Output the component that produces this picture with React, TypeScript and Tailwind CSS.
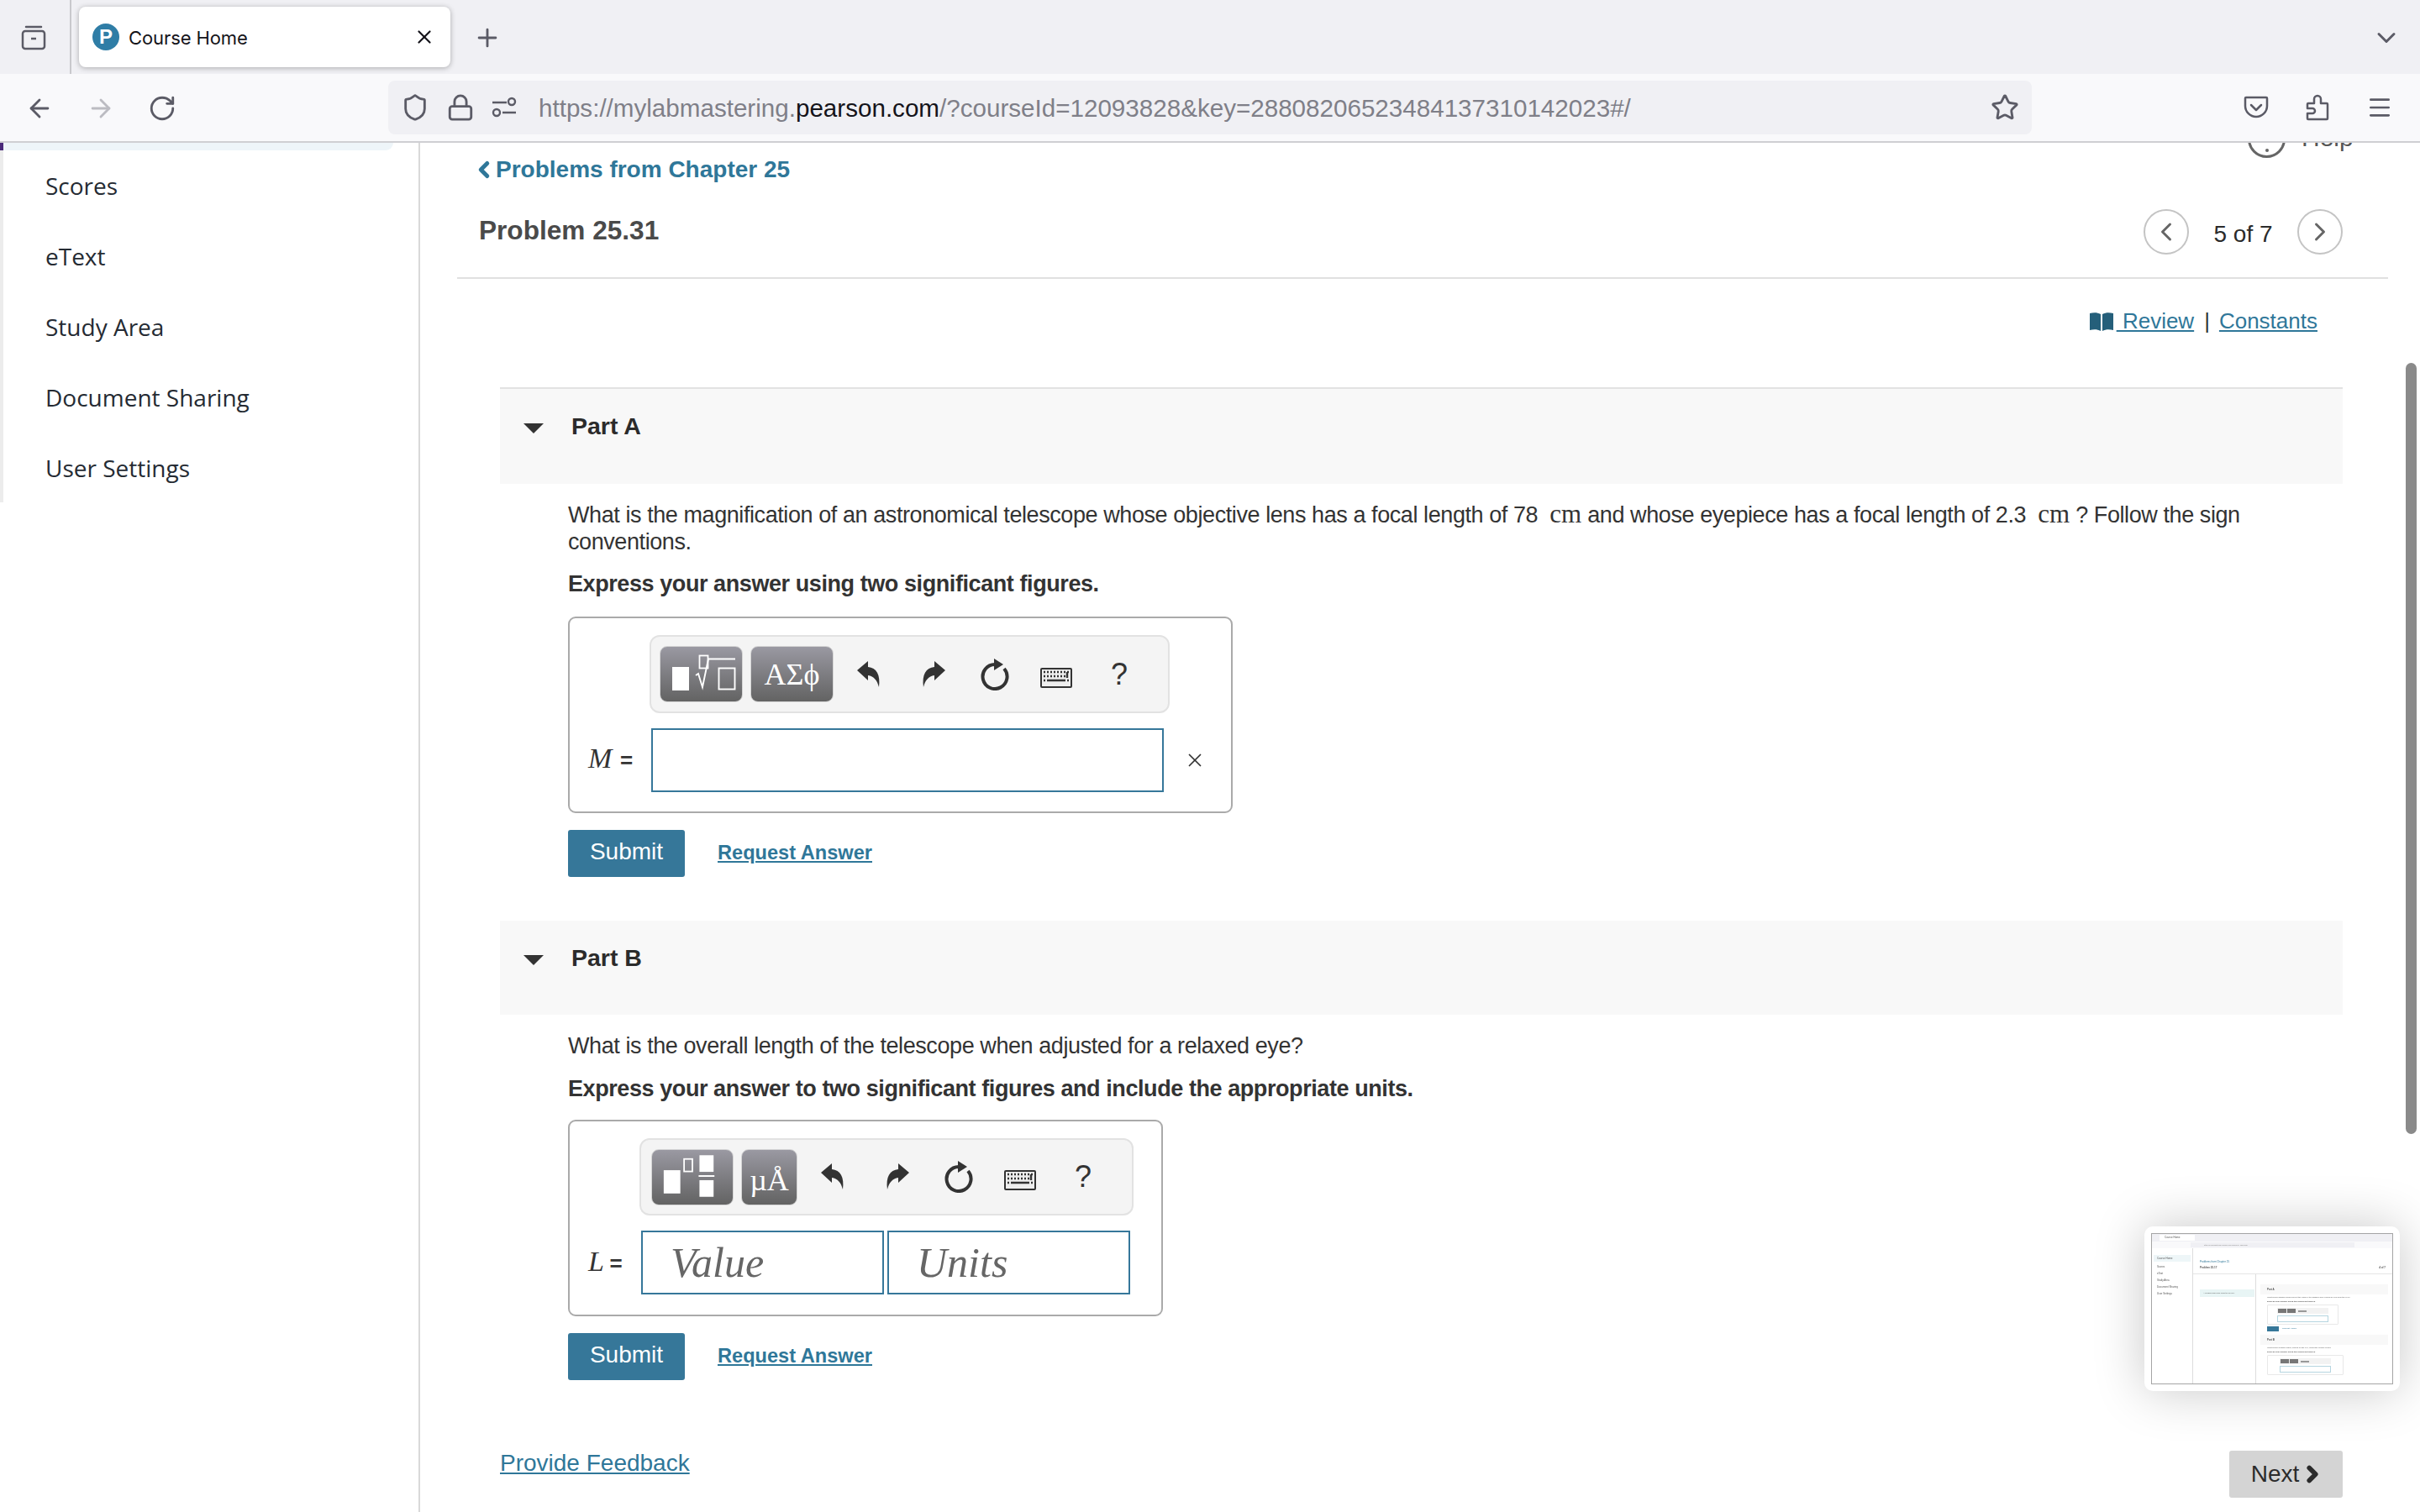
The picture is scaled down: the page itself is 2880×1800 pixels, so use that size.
import { ChevronDown, ChevronLeft, ChevronRight, Plus, X, Star, Menu, ArrowLeft, ArrowRight, RotateCw, Shield, Lock } from "lucide-react"

const serif = "font-['Liberation_Serif',serif]"

function TabGroupsIcon() {
  return (
    <svg width="32" height="32" viewBox="0 0 32 32" fill="none" stroke="#5b5b66" strokeWidth="2.5">
      <rect x="3" y="8" width="26" height="21" rx="3" />
      <path d="M7 3h18" strokeLinecap="round" />
      <path d="M13 17h6" />
    </svg>
  )
}

function PermissionIcon() {
  return (
    <svg width="30" height="28" viewBox="0 0 30 28" fill="none" stroke="#5b5b66" strokeWidth="2.4">
      <path d="M1 8h17M13 20h16" />
      <circle cx="24" cy="7" r="4" />
      <circle cx="6" cy="20" r="4" />
    </svg>
  )
}

function PocketIcon() {
  return (
    <svg width="30" height="30" viewBox="0 0 30 30" fill="none" stroke="#5b5b66" strokeWidth="2.5" strokeLinecap="round" strokeLinejoin="round">
      <path d="M3 3h24a1 1 0 0 1 1 1v9a13 13 0 0 1-26 0V4a1 1 0 0 1 1-1z" />
      <path d="M9 12l6 6 6-6" />
    </svg>
  )
}

function ExtensionIcon() {
  return (
    <svg width="30" height="32" viewBox="0 0 30 32" fill="none" stroke="#5b5b66" strokeWidth="2.5" strokeLinejoin="round">
      <path d="M4 11h7V6a4 4 0 0 1 8 0v5h7a1 1 0 0 1 1 1v17a1 1 0 0 1-1 1H4a1 1 0 0 1-1-1v-6h6a3 3 0 0 0 0-6H3v-5a1 1 0 0 1 1-1z" />
    </svg>
  )
}

function BrowserChrome() {
  return (
    <>
      {/* Tab strip */}
      <div className="h-[88px] bg-[#f0f0f4] flex items-center shrink-0">
        <div className="w-[85px] h-full flex items-center justify-center border-r-2 border-[#c8c8cc] pr-1 pt-[2px]">
          <TabGroupsIcon />
        </div>
        <div className="ml-[9px] w-[442px] h-[72px] bg-white rounded-[8px] shadow-[0_1px_6px_rgba(0,0,0,0.3)] flex items-center px-4">
          <div className="w-[32px] h-[32px] rounded-full bg-[#2f7da6] text-white flex items-center justify-center text-[24px] font-bold font-['Liberation_Sans',sans-serif]">P</div>
          <span className="ml-[11px] pt-[2px] text-[22px] tracking-[-0.1px] text-[#15141a] font-['Inter',sans-serif]">Course Home</span>
          <X className="ml-auto mr-[2px] text-[#15141a]" size={26} strokeWidth={2} />
        </div>
        <Plus className="ml-[27px] mt-[2px] text-[#5b5b66]" size={34} strokeWidth={2} />
        <ChevronDown className="ml-auto mr-[22px] mt-[2px] text-[#5b5b66]" size={36} strokeWidth={2} />
      </div>
      {/* Nav bar */}
      <div className="h-[82px] bg-[#f9f9fb] border-b-2 border-[#cfcfd3] flex items-center shrink-0">
        <div className="w-[462px] flex items-center pl-[30px] gap-[39px] pt-[2px]">
          <ArrowLeft className="text-[#5b5b66]" size={34} strokeWidth={2} />
          <ArrowRight className="text-[#bcbcc2]" size={34} strokeWidth={2} />
          <RotateCw className="text-[#5b5b66]" size={34} strokeWidth={2} />
        </div>
        <div className="w-[1956px] h-[64px] bg-[#f0f0f4] rounded-[8px] flex items-center pl-[15px] pr-[15px]">
          <Shield className="text-[#5b5b66]" size={34} strokeWidth={2} />
          <Lock className="ml-[20px] text-[#5b5b66]" size={34} strokeWidth={2} />
          <div className="ml-[20px]"><PermissionIcon /></div>
          <span className="ml-[26px] pt-[2px] text-[29.6px] text-[#7f7f88] font-['Liberation_Sans',sans-serif] whitespace-nowrap">
            https://mylabmastering.<span className="text-[#15141a]">pearson.com</span>/?courseId=12093828&amp;key=28808206523484137310142023#/
          </span>
          <Star className="ml-auto text-[#5b5b66]" size={34} strokeWidth={2} />
        </div>
        <div className="ml-auto flex items-center gap-[43px] pr-[32px]">
          <PocketIcon />
          <ExtensionIcon />
          <Menu className="text-[#5b5b66]" size={32} strokeWidth={2} />
        </div>
      </div>
    </>
  )
}

function Sidebar() {
  const items = ["Scores", "eText", "Study Area", "Document Sharing", "User Settings"]
  return (
    <div className="w-[500px] shrink-0 border-r-2 border-[#d9d9d9] bg-white font-['Open_Sans',sans-serif]">
      <div className="w-[468px] h-[428px] border-l-[4px] border-[#ececec] relative">
        <div className="absolute -left-[4px] top-0 w-[4px] h-[9px] bg-[#4a2a7a]" />
        <div className="h-[9px] bg-[#eef5f9] rounded-br-[10px]" />
        <div className="flex flex-col gap-[42px] pt-[21px] pl-[50px]">
          {items.map((t) => (
            <div key={t} className="text-[28px] leading-[42px] text-[#252b33] whitespace-nowrap">{t}</div>
          ))}
        </div>
      </div>
    </div>
  )
}

function UndoIcon({ flip }: { flip?: boolean }) {
  return (
    <svg width="30" height="34" viewBox="0 0 30 34" className={flip ? "-scale-x-100" : ""} fill="#333">
      <path d="M1 12 L14 1 V8 C24 9 29 17 27 32 C25 24 21 19 14 18 V24 Z" />
    </svg>
  )
}

function ResetIcon() {
  return (
    <svg width="34" height="38" viewBox="0 0 34 38" fill="none">
      <path d="M17 7 A14.5 14.5 0 1 0 28 12" stroke="#333" strokeWidth="4" />
      <path d="M16 0 L27 7 L16 14 Z" fill="#333" />
    </svg>
  )
}

function KeyboardIcon() {
  return (
    <svg width="38" height="24" viewBox="0 0 38 24">
      <rect x="0" y="0" width="38" height="24" rx="2" fill="#333" />
      <rect x="2" y="2" width="34" height="20" fill="#eee" />
      <path d="M4 5h2M8 5h2M12 5h2M16 5h2M20 5h2M24 5h2M28 5h2M32 5h2M4 10h2M8 10h2M12 10h2M16 10h2M20 10h2M24 10h2M28 10h2M32 5v7M4 15h2M8 15h22M32 15h2" stroke="#333" strokeWidth="2.4" fill="none" />
    </svg>
  )
}

function TemplateSqrtIcon() {
  return (
    <svg width="97" height="67" viewBox="0 0 97 67" fill="none">
      <rect x="14" y="25" width="20" height="28" fill="#fff" />
      <rect x="46.5" y="11.5" width="10" height="15" stroke="#fff" strokeWidth="1.8" />
      <path d="M42 35 L45 33 L50 49 L57 15.5 H89" stroke="#fff" strokeWidth="1.9" />
      <rect x="69.5" y="26.5" width="19" height="25" stroke="#fff" strokeWidth="1.9" />
    </svg>
  )
}

function TemplateFracIcon() {
  return (
    <svg width="97" height="67" viewBox="0 0 97 67" fill="none">
      <rect x="14" y="25" width="20" height="28" fill="#fff" />
      <rect x="38.5" y="11.5" width="10" height="15" stroke="#fff" strokeWidth="1.8" />
      <rect x="57" y="7" width="17" height="20" fill="#fff" />
      <rect x="56" y="31" width="19" height="2" fill="#fff" />
      <rect x="57" y="37" width="17" height="20" fill="#fff" />
    </svg>
  )
}

function ToolButton({ width, children }: { width: string; children: React.ReactNode }) {
  return (
    <div className={`${width} h-[67px] shrink-0 rounded-[9px] border border-[#d5d5d5] bg-gradient-to-b from-[#9a99a2] to-[#636363] flex items-center justify-center overflow-hidden`}>
      {children}
    </div>
  )
}

function ToolIcons({ offset }: { offset: string }) {
  return (
    <div className={`flex items-center ${offset}`}>
      <div className="w-[30px] flex justify-center"><UndoIcon /></div>
      <div className="ml-[47px] w-[30px] flex justify-center"><UndoIcon flip /></div>
      <div className="ml-[41px] w-[34px] flex justify-center"><ResetIcon /></div>
      <div className="ml-[37px] w-[38px] flex justify-center pt-2"><KeyboardIcon /></div>
      <div className="ml-[46px] text-[36px] leading-none text-[#333]">?</div>
    </div>
  )
}

function PartHeader({ label, height, border }: { label: string; height: string; border?: boolean }) {
  return (
    <div className={`${height} bg-[#f8f8f8] pl-[28px] pt-[26px] flex ${border ? "border-t-2 border-[#e2e2e2]" : ""}`}>
      <div className="w-[0] h-[0] mt-[15px] border-l-[12px] border-r-[12px] border-t-[12px] border-l-transparent border-r-transparent border-t-[#333]" />
      <div className="ml-[33px] text-[28.5px] leading-[36px] font-bold text-[#2b2b2b]">{label}</div>
    </div>
  )
}

function SubmitRow() {
  return (
    <div className="flex items-center mt-[20px]">
      <div className="w-[139px] h-[56px] rounded-[3px] bg-[#367799] text-white text-[28px] tracking-normal flex items-center justify-center pb-1">Submit</div>
      <div className="ml-[39px] pb-[2px] text-[23.6px] tracking-normal font-bold text-[#2f7799] underline">Request Answer</div>
    </div>
  )
}

function MiniBox({ width, bars }: { width: string; bars: string }) {
  return (
    <div className={`${width} h-[24px] ml-[8px] border border-[#e8e8e8] rounded-[1px] flex flex-col items-center pt-[3px]`}>
      <div className={`${bars} h-[7px] bg-[#f2f2f2] flex items-center pl-[1px] gap-[1px]`}>
        <div className="w-[10px] h-[5px] bg-[#777]" />
        <div className="w-[10px] h-[5px] bg-[#777]" />
        <div className="w-[10px] h-[2px] ml-[2px] bg-[#999]" />
      </div>
      <div className="w-[61px] h-[8px] mt-[2px] border border-[#b5d5e0]" />
    </div>
  )
}

function Thumbnail() {
  return (
    <div className="absolute left-[2552px] top-[1460px] w-[304px] h-[196px] bg-white rounded-[10px] shadow-[0_0_60px_rgba(0,0,0,0.22)] p-[8px]">
      <div className="w-full h-full border border-[#a5a5a5] overflow-hidden flex flex-col blur-[0.3px] font-['Liberation_Sans',sans-serif] text-[3px] text-[#555]">
        <div className="h-[9px] bg-[#f0f0f4] flex items-center pl-[9px] shrink-0">
          <div className="w-[42px] h-[7px] bg-white pl-[6px] leading-[7px]">Course Home</div>
        </div>
        <div className="h-[8px] bg-[#f9f9fb] flex items-center pl-[46px] shrink-0">
          <div className="w-[195px] h-[6px] bg-[#f0f0f4] pl-[16px] leading-[6px] text-[2px] text-[#888] whitespace-nowrap">https://mylabmastering.pearson.com/?courseId=12093828</div>
        </div>
        <div className="flex flex-1 min-h-0">
          <div className="w-[49px] border-r border-[#ddd] pt-[8px] px-[2px] flex flex-col gap-[5px] shrink-0">
            <div className="bg-[#eef6f8] h-[8px] pl-1 leading-[8px]">Course Home</div>
            <div className="pl-1 leading-[3px]">Scores</div>
            <div className="pl-1 leading-[3px]">eText</div>
            <div className="pl-1 leading-[3px]">Study Area</div>
            <div className="pl-1 leading-[3px]">Document Sharing</div>
            <div className="pl-1 leading-[3px]">User Settings</div>
          </div>
          <div className="flex-1 flex flex-col min-w-0">
            <div className="h-[31px] border-b border-[#e5e5e5] pl-[8px] pr-[8px] pt-[14px] leading-[4px] shrink-0">
              <div className="text-[#2f7799]">Problems from Chapter 25</div>
              <div className="font-bold mt-[3px] flex justify-between"><span>Problem 25.17</span><span>4 of 7</span></div>
            </div>
            <div className="flex flex-1 min-h-0">
              <div className="w-[75px] border-r border-[#ddd] pt-[18px] px-[8px] shrink-0">
                <div className="bg-[#e8f5f5] h-[9px] w-[65px] leading-[9px] pl-1 text-[2.5px] whitespace-nowrap">A person has a far point of 16 cm.</div>
              </div>
              <div className="flex-1 pl-[5px] pr-[5px] pt-[12px] min-w-0">
                <div className="bg-[#f8f8f8] h-[12px] pl-[8px] leading-[12px] font-bold">Part A</div>
                <div className="ml-[8px] h-[12px] pt-[1px] text-[2.4px] leading-[5px] whitespace-nowrap">
                  <div>What power glasses would correct the vision if the glasses were placed 2.0 cm from the eye?</div>
                  <div className="font-bold">Express your answer using two significant figures.</div>
                </div>
                <MiniBox width="w-[85px]" bars="w-[61px]" />
                <div className="ml-[8px] mt-[2px] h-[6px] flex items-center">
                  <div className="w-[14px] h-[6px] bg-[#367799]" />
                  <span className="ml-[4px] text-[#2f7799] text-[2.4px]">Request Answer</span>
                </div>
                <div className="bg-[#f8f8f8] h-[12px] pl-[8px] mt-[4px] leading-[12px] font-bold">Part B</div>
                <div className="ml-[8px] h-[12px] pt-[1px] text-[2.4px] leading-[5px] whitespace-nowrap">
                  <div>What power contact lenses, placed on the eye, would the person need?</div>
                  <div className="font-bold">Express your answer using two significant figures.</div>
                </div>
                <MiniBox width="w-[91px]" bars="w-[61px]" />
              </div>
            </div>
          </div>
        </div>
      </div>
    </div>
  )
}

export default function App() {
  return (
    <div className="relative w-[2880px] h-[1800px] overflow-hidden bg-white flex flex-col font-['Liberation_Sans',sans-serif] text-[#333]">
      <BrowserChrome />
      <div className="flex flex-1 min-h-0">
        <Sidebar />
        <div className="flex-1 min-w-0 overflow-hidden">
          {/* Help link, scrolled mostly out of view */}
          <div className="h-[15px] relative">
            <div className="absolute left-[2175px] -top-[27px] flex items-center">
              <div className="w-[45px] h-[45px] rounded-full border-[3px] border-[#666] flex items-end justify-center pb-[4px]">
                <div className="w-[4px] h-[4px] rounded-full bg-[#666]" />
              </div>
              <span className="ml-[19px] -mt-[5px] text-[30px] text-[#555]">Help</span>
            </div>
          </div>

          {/* Title */}
          <div className="ml-[44px] mr-[38px] h-[147px] border-b-2 border-[#e0e0e0] relative">
            <div className="pl-[26px] flex items-center text-[#2f7799] font-bold text-[28px] leading-[34px]">
              <ChevronLeft className="-ml-[9px] -mr-[1px]" size={30} strokeWidth={4} />
              <span>Problems from Chapter 25</span>
            </div>
            <div className="pl-[26px] mt-[36px] flex items-start justify-between pr-[54px]">
              <div className="text-[31.6px] leading-[38px] font-bold text-[#4a4a4a]">Problem 25.31</div>
              <div className="flex items-center -mt-[6px]">
                <div className="w-[54px] h-[54px] rounded-full border-2 border-[#c4c4c4] flex items-center justify-center">
                  <ChevronLeft className="text-[#666]" size={36} strokeWidth={2} />
                </div>
                <div className="w-[129px] text-center text-[28px] text-[#2b2b2b] pt-[6px]">5 of 7</div>
                <div className="w-[54px] h-[54px] rounded-full border-2 border-[#c4c4c4] flex items-center justify-center">
                  <ChevronRight className="text-[#666]" size={36} strokeWidth={2} />
                </div>
              </div>
            </div>
          </div>

          {/* Review / Constants */}
          <div className="h-[129px] pt-[33px] pr-[122px] flex justify-end items-start text-[26px] leading-[34px] text-[#2f7799]">
            <svg width="28" height="22" viewBox="0 0 28 22" className="mt-[7px]" fill="#255f7a">
              <path d="M0 1c5-1 9-1 13 1v20c-4-2-8-2-13-1zM15 2c4-2 8-2 13-1v20c-5-1-9-1-13 1z" />
            </svg>
            <span className="ml-[4px] underline">&nbsp;Review</span>
            <span className="ml-[12px] text-[#333]">|</span>
            <span className="ml-[11px] underline">Constants</span>
          </div>

          {/* Parts */}
          <div className="ml-[95px] w-[2193px]">
            <PartHeader label="Part A" height="h-[115px]" border />
            <div className="pl-[81px] pr-[100px] pt-[20px] text-[27px] tracking-[-0.42px] leading-[32px] text-[#333]">
              <p>
                What is the magnification of an astronomical telescope whose objective lens has a focal length of 78 <span className={`${serif} text-[31px] leading-none tracking-normal ml-[7px]`}>cm</span> and whose eyepiece has a focal length of 2.3 <span className={`${serif} text-[31px] leading-none tracking-normal ml-[7px]`}>cm</span> ? Follow the sign conventions.
              </p>
              <p className="mt-[18px] font-bold">Express your answer using two significant figures.</p>

              <div className="mt-[23px] w-[791px] h-[234px] border-2 border-[#aaa] rounded-[9px] pt-[20px] pl-[95px]">
                <div className="w-[619px] h-[93px] rounded-[12px] border-2 border-[#e2e2e2] bg-[#f4f4f4] flex items-center pl-[10px]">
                  <ToolButton width="w-[99px]"><TemplateSqrtIcon /></ToolButton>
                  <div className="ml-[9px]">
                    <ToolButton width="w-[99px]"><span className={`${serif} text-white text-[36px] tracking-normal`}>ΑΣϕ</span></ToolButton>
                  </div>
                  <ToolIcons offset="ml-[27px]" />
                </div>
                <div className="mt-[18px] flex items-center -ml-[73px]">
                  <div className="w-[75px] whitespace-nowrap pb-[3px]">
                    <span className={`${serif} italic text-[34px]`}>M</span>
                    <span className="ml-[10px] text-[26px] font-bold">=</span>
                  </div>
                  <div className="w-[610px] h-[76px] border-2 border-[#36779a] bg-white" />
                  <X className="ml-[24px] text-[#333]" size={26} strokeWidth={1.6} />
                </div>
              </div>
              <SubmitRow />
            </div>

            <div className="mt-[52px]">
              <PartHeader label="Part B" height="h-[112px]" />
            </div>
            <div className="pl-[81px] pr-[100px] pt-[21px] text-[27px] tracking-[-0.42px] leading-[32px] text-[#333]">
              <p>What is the overall length of the telescope when adjusted for a relaxed eye?</p>
              <p className="mt-[19px] font-bold">Express your answer to two significant figures and include the appropriate units.</p>

              <div className="mt-[21px] w-[708px] h-[234px] border-2 border-[#aaa] rounded-[9px] pt-[20px] pl-[83px]">
                <div className="w-[588px] h-[92px] rounded-[12px] border-2 border-[#e2e2e2] bg-[#f4f4f4] flex items-center pl-[12px]">
                  <ToolButton width="w-[98px]"><TemplateFracIcon /></ToolButton>
                  <div className="ml-[9px]">
                    <ToolButton width="w-[67px]"><span className={`${serif} text-white text-[36px] tracking-normal pt-2`}>µÅ</span></ToolButton>
                  </div>
                  <ToolIcons offset="ml-[27px]" />
                </div>
                <div className="mt-[18px] flex items-center -ml-[61px]">
                  <div className="w-[63px] whitespace-nowrap">
                    <span className={`${serif} italic text-[34px]`}>L</span>
                    <span className="ml-[7px] text-[26px] font-bold">=</span>
                  </div>
                  <div className={`w-[289px] h-[76px] border-2 border-[#36779a] pl-[33px] flex items-center ${serif} italic text-[50px] tracking-normal text-[#666]`}>Value</div>
                  <div className={`ml-[4px] w-[289px] h-[76px] border-2 border-[#36779a] pl-[33px] flex items-center ${serif} italic text-[50px] tracking-normal text-[#666]`}>Units</div>
                </div>
              </div>
              <SubmitRow />
            </div>

            {/* Footer */}
            <div className="mt-[84px] flex items-start justify-between">
              <div className="-mt-[2px] text-[28px] leading-[34px] text-[#2f7799] underline">Provide Feedback</div>
              <div className="w-[135px] h-[56px] rounded-[3px] bg-[#d4d4d4] flex items-center justify-center text-[28px] text-[#2b2b2b]">
                Next
                <ChevronRight className="-mr-[5px] ml-[1px]" size={30} strokeWidth={4.5} />
              </div>
            </div>
          </div>
        </div>
      </div>

      {/* Overlay scrollbar */}
      <div className="absolute left-[2863px] top-[432px] w-[13px] h-[918px] rounded-full bg-[#8a8a8a]" />
      <Thumbnail />
    </div>
  )
}
